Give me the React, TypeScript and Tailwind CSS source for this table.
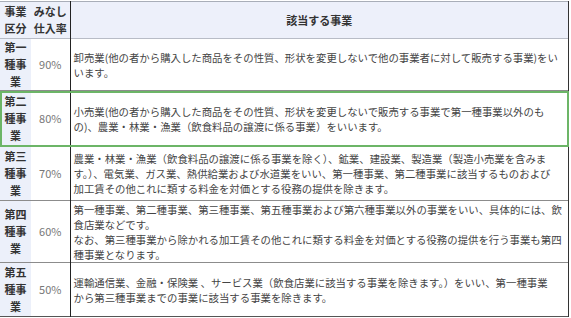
import React from "react";

const rows = [
  {
    kind: "第一種事業",
    rate: "90%",
    h: "h-[51px]",
    lines: [
      "卸売業(他の者から購入した商品をその性質、形状を変更しないで他の事業者に対して販売する事業)をい",
      "います。",
    ],
  },
  {
    kind: "第二種事業",
    rate: "80%",
    h: "h-[56px]",
    active: true,
    lines: [
      "小売業(他の者から購入した商品をその性質、形状を変更しないで販売する事業で第一種事業以外のも",
      "の)、農業・林業・漁業（飲食料品の譲渡に係る事業）をいいます。",
    ],
  },
  {
    kind: "第三種事業",
    rate: "70%",
    h: "h-[54px]",
    lines: [
      "農業・林業・漁業（飲食料品の譲渡に係る事業を除く）、鉱業、建設業、製造業（製造小売業を含みま",
      "す。）、電気業、ガス業、熱供給業および水道業をいい、第一種事業、第二種事業に該当するものおよび",
      "加工賃その他これに類する料金を対価とする役務の提供を除きます。",
    ],
  },
  {
    kind: "第四種事業",
    rate: "60%",
    h: "h-[62px]",
    lines: [
      "第一種事業、第二種事業、第三種事業、第五種事業および第六種事業以外の事業をいい、具体的には、飲",
      "食店業などです。",
      "なお、第三種事業から除かれる加工賃その他これに類する料金を対価とする役務の提供を行う事業も第四",
      "種事業となります。",
    ],
  },
  {
    kind: "第五種事業",
    rate: "50%",
    h: "h-[54px]",
    lines: [
      "運輸通信業、金融・保険業 、サービス業（飲食店業に該当する事業を除きます。）をいい、第一種事業",
      "から第三種事業までの事業に該当する事業を除きます。",
    ],
  },
];

export default function App() {
  return (
    <div className="w-[571px] h-[318px] bg-white pt-px overflow-hidden font-['Noto_Sans_CJK_JP',sans-serif]">
      <table className="w-[569px] border-collapse table-fixed text-[#444]">
        <colgroup>
          <col className="w-[31px]" />
          <col className="w-[39px]" />
          <col />
        </colgroup>
        <thead>
          <tr className="h-[37px] bg-[#edf0fa] border-t border-[#a9aeb8]">
            <th className="p-0 text-[11px] leading-[17px] font-bold text-center align-middle text-[#333]">
              事業<br />区分
            </th>
            <th className="p-0 text-[11px] leading-[17px] font-bold text-center align-middle text-[#333] border-r border-r-[#222]">
              みなし<br />仕入率
            </th>
            <th className="p-0 text-[11px] leading-[17px] font-bold text-center align-middle text-[#333] border-r border-r-[#333]">
              該当する事業
            </th>
          </tr>
        </thead>
        <tbody>
          {rows.map((r, idx) => (
            <tr
              key={r.kind}
              className={`${r.h} border-t ${idx === 0 ? "border-[#b8bcc6]" : "border-[#8c8c8c]"} ${
                r.active ? "outline-2 -outline-offset-2 outline-[#6cb567]" : ""
              }`}
            >
              <td className="bg-[#ecf0fa] px-[4px] py-0 text-[11px] leading-[17px] font-bold text-center text-[#333] align-middle">
                {r.kind}
              </td>
              <td className="p-0 text-center text-[11px] text-[#777] align-middle border-r border-r-[#222]">
                {r.rate}
              </td>
              <td className="pl-[3px] pr-0 py-0 text-[10.4px] leading-[15px] align-middle border-r border-r-[#333]">
                {r.lines.map((t, i) => (
                  <div key={i} className="whitespace-nowrap">
                    {t}
                  </div>
                ))}
              </td>
            </tr>
          ))}
          <tr className="border-t border-[#555]">
            <td colSpan={3} className="h-0 p-0"></td>
          </tr>
        </tbody>
      </table>
    </div>
  );
}
